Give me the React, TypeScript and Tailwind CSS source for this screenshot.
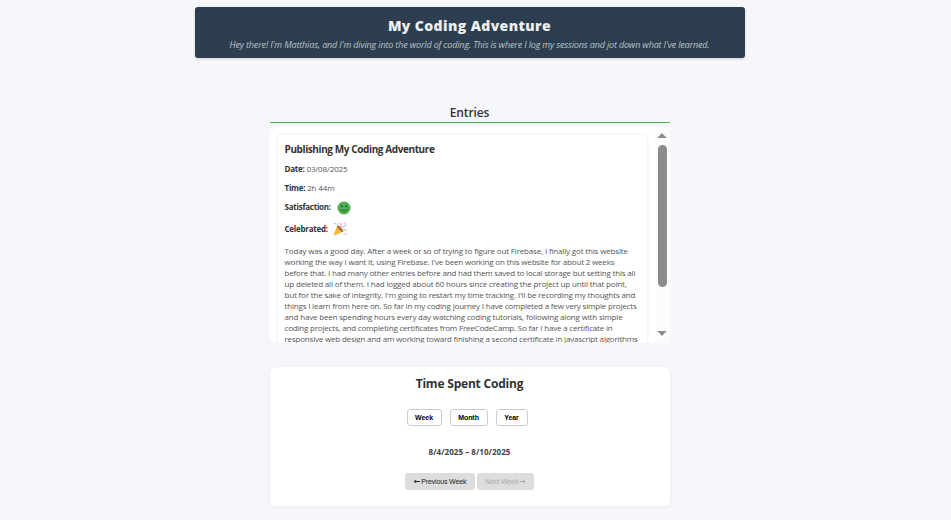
import React from 'react';

const journal: { text: string; tracking: string }[] = [
  { text: 'Today was a good day. After a week or so of trying to figure out Firebase, I finally got this website', tracking: 'tracking-[-0.16px]' },
  { text: "working the way I want it, using Firebase. I've been working on this website for about 2 weeks", tracking: 'tracking-[-0.18px]' },
  { text: 'before that. I had many other entries before and had them saved to local storage but setting this all', tracking: 'tracking-[-0.19px]' },
  { text: 'up deleted all of them. I had logged about 60 hours since creating the project up until that point,', tracking: 'tracking-[-0.16px]' },
  { text: "but for the sake of integrity, I'm going to restart my time tracking. I'll be recording my thoughts and", tracking: 'tracking-[-0.16px]' },
  { text: 'things I learn from here on. So far in my coding journey I have completed a few very simple projects', tracking: 'tracking-[-0.18px]' },
  { text: 'and have been spending hours every day watching coding tutorials, following along with simple', tracking: 'tracking-[-0.17px]' },
  { text: 'coding projects, and completing certificates from FreeCodeCamp. So far I have a certificate in', tracking: 'tracking-[-0.19px]' },
  { text: 'responsive web design and am working toward finishing a second certificate in javascript algorithms', tracking: 'tracking-[-0.19px]' },
];

function Smiley() {
  return (
    <svg width="14" height="14" viewBox="0 0 14 14" className="mt-[1px] ml-[6px]">
      <circle cx="7" cy="7" r="6.5" fill="#4caf50" />
      <circle cx="4.7" cy="5.2" r="0.9" fill="#1f5a2b" />
      <circle cx="9.3" cy="5.2" r="0.9" fill="#1f5a2b" />
      <path d="M3.6 8.6 Q7 12 10.4 8.6" fill="none" stroke="#1f5a2b" strokeWidth="1" strokeLinecap="round" />
    </svg>
  );
}

function PartyPopper() {
  return (
    <svg width="15" height="14" viewBox="0 0 15 14" className="mt-[1px] ml-[5.5px]">
      <path d="M4.2 3.6 L0.6 13 Q0.9 13.7 1.8 13.3 L10.4 9.8 Z" fill="#f9c23c" />
      <path d="M3 7 L6.6 11.4 M1.8 10 L4 12.4" stroke="#e19747" strokeWidth="0.9" />
      <ellipse cx="7.2" cy="6.8" rx="1.4" ry="4.2" transform="rotate(-43 7.2 6.8)" fill="#a8703f" />
      <path d="M7 6 Q8.8 4 7.8 1" fill="none" stroke="#ec6f7a" strokeWidth="0.9" />
      <path d="M8.3 7 Q10.6 4.4 13.4 2.6" fill="none" stroke="#6c9bf2" strokeWidth="0.9" />
      <path d="M9.2 8.4 Q11.5 7 13.8 8.8" fill="none" stroke="#ee8a8a" strokeWidth="0.9" />
      <circle cx="2" cy="1.6" r="0.8" fill="#7cc0f4" />
      <circle cx="4.8" cy="2" r="0.7" fill="#e58bd8" />
      <circle cx="11.6" cy="1.2" r="0.8" fill="#f4a6b8" />
      <circle cx="11.2" cy="12.2" r="0.7" fill="#f0a17d" />
      <circle cx="13.4" cy="12" r="0.7" fill="#8fa8f0" />
    </svg>
  );
}

function Header() {
  return (
    <header className="mx-auto h-[51px] w-[550px] rounded-[3px] bg-[#2c3e50] pt-[9px] text-center whitespace-nowrap shadow-[0_1px_3px_rgba(0,0,0,0.15)]">
      <h1 className="text-[14px] leading-[20px] font-extrabold tracking-[0.4px] text-[#ecf0f1]">My Coding Adventure</h1>
      <p className="mt-[1px] text-[9px] leading-[16px] tracking-[-0.155px] text-[#bdc3c7] italic">
        Hey there! I'm Matthias, and I'm diving into the world of coding. This is where I log my sessions and jot down what I've learned.
      </p>
    </header>
  );
}

function Field({ label, height, children }: { label: string; height: string; children: React.ReactNode }) {
  return (
    <div className={`flex items-center ${height}`}>
      <span className="font-bold tracking-[-0.25px] text-[#333]">{label}</span>
      {children}
    </div>
  );
}

function Entries() {
  return (
    <section className="mx-auto mt-[45px] w-[400px]">
      <h2 className="h-[20px] border-b border-[#4caf50] text-center text-[12px] leading-[19px] font-semibold tracking-[-0.1px] text-[#333]">Entries</h2>
      <div className="mt-[4px] flex h-[216px] overflow-hidden rounded-l-[6px] bg-white">
        <div className="w-[381px] overflow-hidden pt-[8px] pl-[8px]">
          <article className="h-[240px] w-[369px] rounded-[4px] bg-white px-[7px] pt-[6px] text-[8px] whitespace-nowrap text-[#555] shadow-[0_0_4px_rgba(0,0,0,0.09)]">
            <h3 className="text-[10px] leading-[17px] font-bold tracking-[-0.4px] text-[#333]">Publishing My Coding Adventure</h3>
            <div className="mt-[1px]">
              <Field label="Date:" height="h-[19px]"><span className="ml-[2px] tracking-[-0.15px]">03/08/2025</span></Field>
              <Field label="Time:" height="h-[19px]"><span className="ml-[2px] tracking-[-0.15px]">2h 44m</span></Field>
              <Field label="Satisfaction:" height="h-[20px]"><Smiley /></Field>
              <Field label="Celebrated:" height="h-[23px]"><PartyPopper /></Field>
            </div>
            <p className="mt-[5px] leading-[11px]">
              {journal.map((line) => (
                <span key={line.text} className={`block w-max ${line.tracking}`}>{line.text}</span>
              ))}
            </p>
          </article>
        </div>
        <div className="ml-auto flex w-[15px] flex-col items-center bg-[#fcfcfc] pt-[6px]">
          <svg width="10" height="5" viewBox="0 0 10 5"><path d="M0.3 5 L5 0 L9.7 5Z" fill="#8b8b8b" /></svg>
          <div className="mt-[7px] h-[142px] w-[9px] rounded-full bg-[#8b8b8b]" />
          <svg width="10" height="5" viewBox="0 0 10 5" className="mt-[44px]"><path d="M0.3 0 L5 5 L9.7 0Z" fill="#8b8b8b" /></svg>
        </div>
      </div>
    </section>
  );
}

function TimeSpent() {
  const tab = 'h-[17px] rounded-[3px] border border-[#ccc] bg-white text-[7px] leading-[15px] font-bold tracking-[-0.05px] text-black';
  const nav = 'flex h-[17px] items-center justify-center gap-[1px] rounded-[3px] bg-[#ddd] text-[7px] leading-[17px]';
  const arrow = "font-['DejaVu_Sans',sans-serif] text-[8px] font-bold";
  return (
    <section className="mx-auto mt-[24px] h-[139px] w-[400px] rounded-[6px] bg-white pt-[7px] text-center whitespace-nowrap shadow-[0_1px_4px_rgba(0,0,0,0.06)]">
      <h2 className="text-[12px] leading-[20px] font-bold tracking-[-0.2px] text-[#333]">Time Spent Coding</h2>
      <div className="mt-[15px] flex justify-center gap-[8px] pr-[5px] font-['Liberation_Sans',sans-serif]">
        <button className={`${tab} w-[35px]`}>Week</button>
        <button className={`${tab} w-[38px]`}>Month</button>
        <button className={`${tab} w-[32px]`}>Year</button>
      </div>
      <p className="mt-[18px] text-[8px] leading-[16px] font-bold tracking-[0.05px] text-[#444]">8/4/2025 – 8/10/2025</p>
      <div className="mt-[13px] flex justify-center gap-[2px] font-['Liberation_Sans',sans-serif]">
        <button className={`${nav} w-[70px] tracking-[-0.15px] text-[#222]`}><span className={arrow}>←</span>Previous Week</button>
        <button className={`${nav} w-[57px] tracking-[-0.1px] text-[#aaa]`}>Next Week<span className={arrow}>→</span></button>
      </div>
    </section>
  );
}

export default function App() {
  return (
    <div className="h-[520px] overflow-hidden bg-[#f5f7fb] pt-[7px] pr-[12px] font-['Open_Sans','Noto_Sans',sans-serif]">
      <Header />
      <Entries />
      <TimeSpent />
    </div>
  );
}
